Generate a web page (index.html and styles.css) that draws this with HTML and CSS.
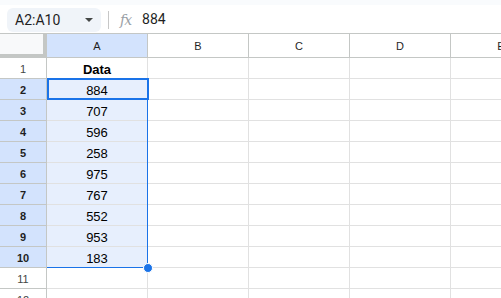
FILE: index.html
```html
<!DOCTYPE html>
<html>
<head>
<meta charset="utf-8">
<link rel="stylesheet" href="styles.css">
</head>
<body>
<div class="app">
  <div class="topstrip"></div>
  <div class="toolbar">
    <div class="namebox">
      <span class="nb-text">A2:A10</span>
      <svg class="caret" width="8" height="4" viewBox="0 0 8 4"><path d="M0 0 L8 0 L4 4 Z" fill="#444746"/></svg>
    </div>
    <div class="divider"></div>
    <span class="fx">fx</span>
    <span class="formula">884</span>
  </div>
  <div class="grid">
    <div class="row hrow">
      <div class="corner"></div>
      <div class="colhead sel">A</div>
      <div class="colhead">B</div>
      <div class="colhead">C</div>
      <div class="colhead">D</div>
      <div class="colhead">E</div>
    </div>
    <div class="row"><div class="rowhead">1</div><div class="cell bold">Data</div><div class="cell"></div><div class="cell"></div><div class="cell"></div><div class="cell"></div></div>
    <div class="row"><div class="rowhead sel">2</div><div class="cell fill">884</div><div class="cell"></div><div class="cell"></div><div class="cell"></div><div class="cell"></div></div>
    <div class="row"><div class="rowhead sel">3</div><div class="cell fill">707</div><div class="cell"></div><div class="cell"></div><div class="cell"></div><div class="cell"></div></div>
    <div class="row"><div class="rowhead sel">4</div><div class="cell fill">596</div><div class="cell"></div><div class="cell"></div><div class="cell"></div><div class="cell"></div></div>
    <div class="row"><div class="rowhead sel">5</div><div class="cell fill">258</div><div class="cell"></div><div class="cell"></div><div class="cell"></div><div class="cell"></div></div>
    <div class="row"><div class="rowhead sel">6</div><div class="cell fill">975</div><div class="cell"></div><div class="cell"></div><div class="cell"></div><div class="cell"></div></div>
    <div class="row"><div class="rowhead sel">7</div><div class="cell fill">767</div><div class="cell"></div><div class="cell"></div><div class="cell"></div><div class="cell"></div></div>
    <div class="row"><div class="rowhead sel">8</div><div class="cell fill">552</div><div class="cell"></div><div class="cell"></div><div class="cell"></div><div class="cell"></div></div>
    <div class="row"><div class="rowhead sel">9</div><div class="cell fill">953</div><div class="cell"></div><div class="cell"></div><div class="cell"></div><div class="cell"></div></div>
    <div class="row"><div class="rowhead sel">10</div><div class="cell fill">183</div><div class="cell"></div><div class="cell"></div><div class="cell"></div><div class="cell"></div></div>
    <div class="row"><div class="rowhead">11</div><div class="cell"></div><div class="cell"></div><div class="cell"></div><div class="cell"></div><div class="cell"></div></div>
    <div class="row"><div class="rowhead">12</div><div class="cell"></div><div class="cell"></div><div class="cell"></div><div class="cell"></div><div class="cell"></div></div>
    <div class="range"></div>
    <div class="active"></div>
    <div class="handle"></div>
  </div>
</div>
</body>
</html>
```
FILE: styles.css
```css
html, body {
  margin: 0;
  padding: 0;
  background: #ffffff;
  overflow: hidden;
}
.app {
  width: 501px;
  height: 298px;
  overflow: hidden;
  font-family: "Liberation Sans", Arial, sans-serif;
  color: #1f1f1f;
}
.topstrip {
  height: 5px;
  background: #f9fbfd;
}
.toolbar {
  height: 29px;
  box-sizing: border-box;
  border-bottom: 1px solid #c4c7c5;
  display: flex;
  align-items: flex-start;
}
.namebox {
  margin-left: 7px;
  margin-top: 3px;
  width: 94px;
  height: 24px;
  box-sizing: border-box;
  background: #f0f4f9;
  border-radius: 6px;
  display: flex;
  align-items: center;
  padding-left: 8px;
  padding-right: 8px;
}
.nb-text {
  font-family: Roboto, "Liberation Sans", sans-serif;
  font-size: 14px;
  color: #1f1f1f;
  flex: 1;
}
.caret {
  display: block;
}
.divider {
  width: 1px;
  height: 18px;
  background: #c7c7c7;
  margin-left: 7px;
  margin-top: 6px;
}
.fx {
  font-family: "DejaVu Serif", "Liberation Serif", serif;
  font-style: italic;
  font-size: 14px;
  color: #9aa0a6;
  margin-left: 11px;
  margin-top: 7px;
  letter-spacing: -1px;
}
.formula {
  font-family: Roboto, "Liberation Sans", sans-serif;
  font-size: 14px;
  color: #1f1f1f;
  margin-left: 11px;
  margin-top: 6px;
}
.grid {
  position: relative;
}
.row {
  display: flex;
  height: 21px;
}
.hrow {
  height: 24px;
}
.corner {
  width: 47px;
  flex: none;
  box-sizing: border-box;
  height: 24px;
  background: #f8f9fa;
  border-right: 4px solid #c4c7c5;
  border-bottom: 4px solid #c4c7c5;
}
.colhead {
  width: 101px;
  flex: none;
  box-sizing: border-box;
  height: 24px;
  border-right: 1px solid #c4c7c5;
  border-bottom: 1px solid #c4c7c5;
  background: #ffffff;
  font-size: 11px;
  color: #1f1f1f;
  display: flex;
  align-items: center;
  justify-content: center;
  padding-top: 1px;
}
.colhead.sel {
  background: #d3e3fd;
}
.rowhead {
  width: 47px;
  flex: none;
  box-sizing: border-box;
  height: 21px;
  border-right: 1px solid #c4c7c5;
  border-bottom: 1px solid #c4c7c5;
  background: #ffffff;
  font-size: 11px;
  color: #444746;
  display: flex;
  align-items: center;
  justify-content: center;
  padding-top: 1px;
}
.rowhead.sel {
  background: #d3e3fd;
  font-weight: bold;
  color: #1f1f1f;
}
.cell {
  width: 101px;
  flex: none;
  box-sizing: border-box;
  height: 21px;
  border-right: 1px solid #e1e1e1;
  border-bottom: 1px solid #e1e1e1;
  font-size: 13px;
  display: flex;
  align-items: center;
  justify-content: center;
  padding-top: 3px;
  color: #000000;
}
.cell.bold {
  font-weight: bold;
}
.cell.fill {
  background: #e7effd;
}
.range {
  position: absolute;
  left: 47px;
  top: 44px;
  width: 101px;
  height: 190px;
  box-sizing: border-box;
  border-right: 1px solid #1a73e8;
  border-bottom: 1px solid #1a73e8;
}
.active {
  position: absolute;
  left: 47px;
  top: 44px;
  width: 102px;
  height: 22px;
  box-sizing: border-box;
  border: 2px solid #1a73e8;
}
.handle {
  position: absolute;
  left: 143px;
  top: 229px;
  width: 8px;
  height: 8px;
  border-radius: 50%;
  background: #1a73e8;
  border: 1px solid #ffffff;
}
```
